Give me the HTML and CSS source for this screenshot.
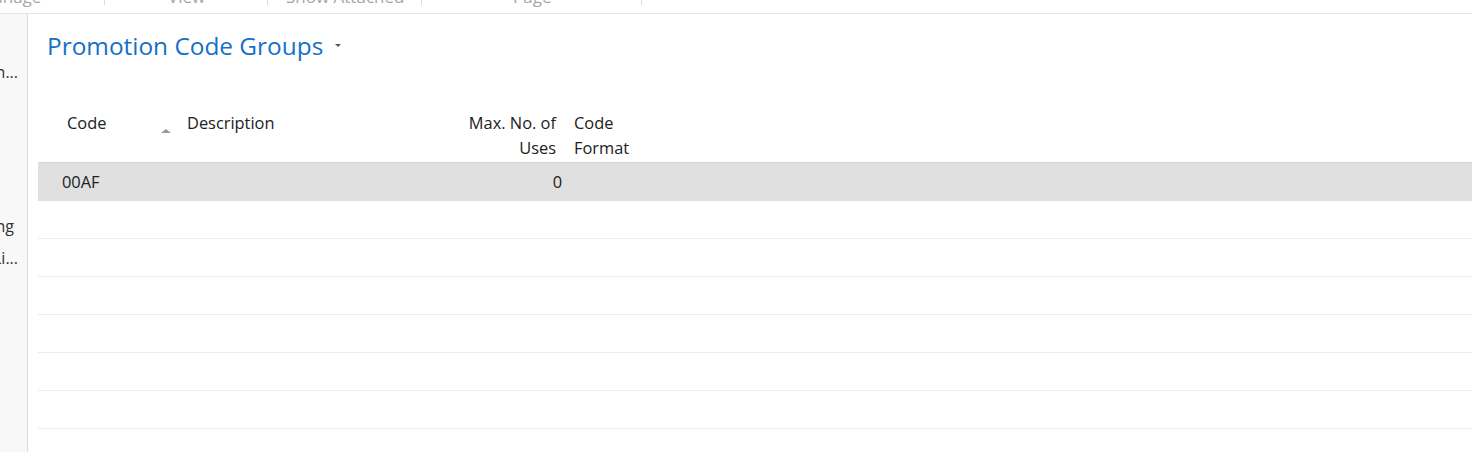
FILE: index.html
```html
<!DOCTYPE html>
<html>
<head>
<meta charset="utf-8">
<link rel="stylesheet" href="styles.css">
</head>
<body>
<div class="toolbar">
  <span class="tb-item tb-manage">Manage</span><span class="tb-sep"></span>
  <span class="tb-item tb-view">View</span><span class="tb-sep"></span>
  <span class="tb-item tb-show">Show Attached</span><span class="tb-sep"></span>
  <span class="tb-item tb-page">Page</span><span class="tb-sep"></span>
</div>
<div class="body">
  <aside class="side">
    <div class="side-item s1"><span>Promotion...</span></div>
    <div class="side-item s2"><span>Setting</span></div>
    <div class="side-item s3"><span>Li...</span></div>
  </aside>
  <main class="main">
    <h1 class="title">Promotion Code Groups <span class="caret"></span></h1>
    <div class="grid">
      <div class="row head">
        <div class="cell c1">Code<span class="sort"></span></div>
        <div class="cell c2">Description</div>
        <div class="cell c3">Max. No. of<br>Uses</div>
        <div class="cell c4">Code<br>Format</div>
      </div>
      <div class="row data selected">
        <div class="cell c1">00AF</div>
        <div class="cell c2"></div>
        <div class="cell c3">0</div>
        <div class="cell c4"></div>
      </div>
      <div class="row data"></div>
      <div class="row data"></div>
      <div class="row data"></div>
      <div class="row data"></div>
      <div class="row data"></div>
      <div class="row data"></div>
    </div>
  </main>
</div>
</body>
</html>
```
FILE: styles.css
```css
* { box-sizing: border-box; }
html, body { margin: 0; padding: 0; }
body {
  width: 1472px;
  height: 452px;
  overflow: hidden;
  background: #fff;
  font-family: "Open Sans", "Noto Sans", sans-serif;
  color: #212121;
}
.toolbar {
  height: 14px;
  border-bottom: 1px solid #e6e6e6;
  overflow: hidden;
  display: flex;
  align-items: flex-start;
  font-size: 17px;
  color: #a6a6a6;
  white-space: nowrap;
}
.tb-item { display: block; margin-top: -14px; line-height: 22px; }
.tb-sep { display: block; width: 1px; height: 5px; background: #dcdcdc; margin-top: 0; }
.tb-manage { margin-left: -22px; width: 126px; }
.tb-view { width: 162px; padding-left: 63px; }
.tb-show { width: 153px; padding-left: 18px; }
.tb-page { width: 219px; padding-left: 91px; }
.body { display: flex; height: 438px; }
.side {
  width: 28px;
  flex: none;
  background: #f8f8f8;
  border-right: 1px solid #dadada;
  overflow: hidden;
  font-size: 16px;
  color: #333;
}
.side-item {
  display: flex;
  justify-content: flex-end;
  white-space: nowrap;
  line-height: 22px;
  width: 27px;
}
.side-item span { flex: none; }
.s1 { margin-top: 47px; padding-right: 9px; }
.s2 { margin-top: 132px; padding-right: 13px; }
.s3 { margin-top: 10px; padding-right: 9px; }
.main { flex: 1; min-width: 0; }
.title {
  margin: 0;
  padding: 16px 0 0 19px;
  font-weight: 400;
  font-size: 24.4px;
  line-height: 32px;
  color: #1470c8;
  display: flex;
  align-items: center;
}
.caret {
  display: inline-block;
  width: 0; height: 0;
  margin-left: 12px;
  border-left: 3px solid transparent;
  border-right: 3px solid transparent;
  border-top: 3px solid #555;
  margin-top: -2px;
}
.grid { margin: 39px 0 0 10px; }
.row {
  display: grid;
  grid-template-columns: 139px 203px 186px 1fr;
  font-size: 16.4px;
}
.head {
  height: 62px;
  line-height: 25px;
  border-bottom: 1px solid #d6d6d6;
}
.head .cell { align-self: start; padding-top: 9px; }
.head .c1 { padding-left: 29px; position: relative; height: 50px; }
.sort {
  position: absolute;
  left: 123px;
  top: 28px;
  width: 0; height: 0;
  border-left: 5px solid transparent;
  border-right: 5px solid transparent;
  border-bottom: 4px solid #9a9a9a;
}
.head .c2 { padding-left: 10px; }
.head .c3 { text-align: right; padding-right: 10px; }
.head .c4 { padding-left: 8px; }
.data {
  height: 38px;
  border-bottom: 1px solid #ececec;
  align-items: center;
  line-height: 22px;
}
.data.selected { background: #e0e0e0; border-bottom-color: #e0e0e0; }
.data .c1 { padding-left: 24px; }
.data .c3 { text-align: right; padding-right: 4px; }
```
